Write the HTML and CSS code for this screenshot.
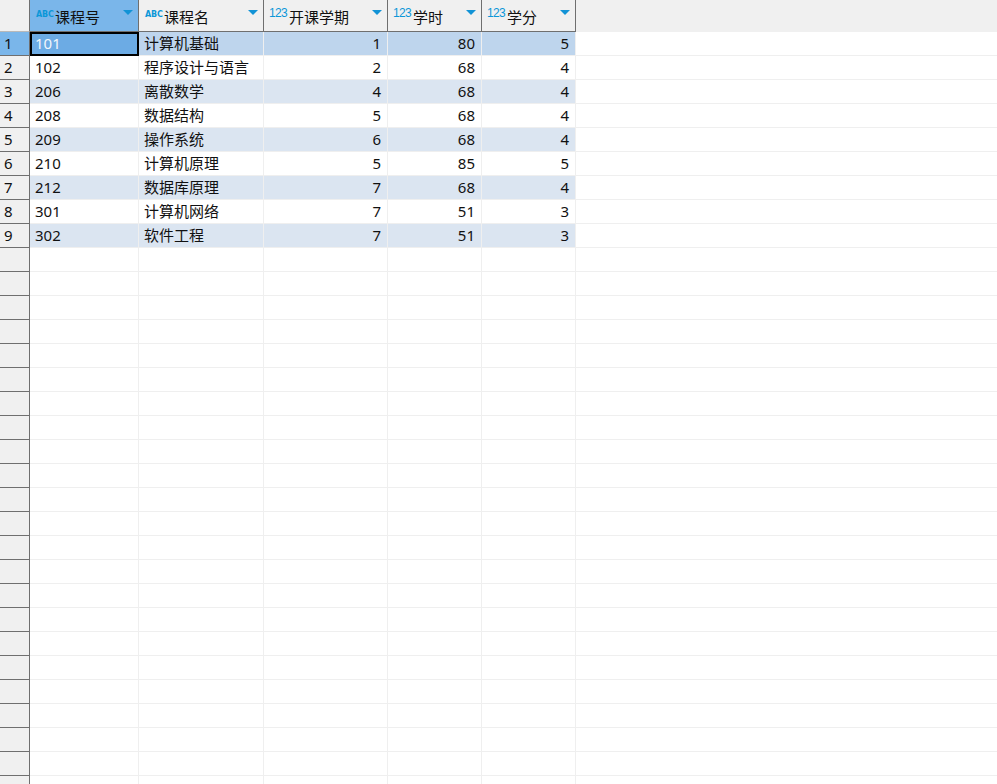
FILE: index.html
```html
<!DOCTYPE html>
<html lang="zh">
<head>
<meta charset="utf-8">
<title>课程表</title>
<link rel="stylesheet" href="styles.css">
</head>
<body>
<div class="sheet" id="sheet">
  <div class="row head">
    <div class="h corner"></div>
    <div class="h active"><span class="ic abc">ABC</span><span class="ht">课程号</span><i class="tri"></i></div>
    <div class="h"><span class="ic abc">ABC</span><span class="ht">课程名</span><i class="tri"></i></div>
    <div class="h"><span class="ic num">123</span><span class="ht">开课学期</span><i class="tri"></i></div>
    <div class="h"><span class="ic num">123</span><span class="ht">学时</span><i class="tri"></i></div>
    <div class="h"><span class="ic num">123</span><span class="ht">学分</span><i class="tri"></i></div>
    <div class="h rest"></div>
  </div>
</div>
<script src="app.js"></script>
</body>
</html>
```

FILE: styles.css
```css
html, body { margin: 0; padding: 0; background: #fff; }
body { width: 997px; height: 784px; overflow: hidden; font-family: "Noto Sans", "Noto Sans CJK SC", sans-serif; color: #111; }
.sheet { display: block; }
.row { display: grid; grid-template-columns: 30px 109px 125px 124px 94px 94px 1fr; height: 24px; }
.row.head { height: 32px; background: #f0f0f0; }
.h { box-sizing: border-box; height: 32px; border-right: 1px solid #6f6f6f; border-bottom: 1px solid #6f6f6f; display: flex; align-items: center; padding: 0 5px 0 6px; position: relative; }
.h.corner { padding: 0; border-bottom-color: #b9b9b9; }
.h.active { background: #7ab6ea; }
.h.rest { border: 0; }
.ic { color: #0c97d8; line-height: 1; position: relative; }
.abc { font: bold 8px "DejaVu Sans", sans-serif; width: 19px; top: -1px; letter-spacing: -.2px; }
.num { font: 12px "Liberation Sans", sans-serif; width: 20px; top: -3px; margin-left: -1px; letter-spacing: -.7px; }
.ht { font: 15px/18px "Noto Sans CJK SC", sans-serif; color: #111; white-space: nowrap; position: relative; top: 1px; }
.tri { position: absolute; right: 5px; top: 10px; width: 0; height: 0; border-left: 5px solid transparent; border-right: 5px solid transparent; border-top: 5px solid #1293d6; }
.c { box-sizing: border-box; height: 24px; border-right: 1px solid #efefef; border-bottom: 1px solid #efefef; padding: 0 5px; line-height: 23px; font-size: 15px; white-space: nowrap; overflow: hidden; }
.c.rn { background: #f0f0f0; border-right-color: #6f6f6f; border-bottom-color: #6f6f6f; padding-left: 4px; text-align: left; }
.c.rn.on { background: #7ab6ea; }
.c.cn { font: 15px/22px "Noto Sans CJK SC", sans-serif; }
.c.r { text-align: right; padding-right: 6px; }
.c.fill { border-right: 0; }
.row.sel .c:not(.rn):not(.fill) { background: #bed5ed; }
.row.alt .c:not(.rn):not(.fill) { background: #dbe5f1; }
.row.sel .c.cur:not(.rn):not(.fill) { background: #6cabe4; color: #f2f7fc; outline: 2px solid #000; outline-offset: -2px; border: 0; line-height: 23px; }
```

FILE: app.js
```js
var data = [
  ["101", "计算机基础", 1, 80, 5],
  ["102", "程序设计与语言", 2, 68, 4],
  ["206", "离散数学", 4, 68, 4],
  ["208", "数据结构", 5, 68, 4],
  ["209", "操作系统", 6, 68, 4],
  ["210", "计算机原理", 5, 85, 5],
  ["212", "数据库原理", 7, 68, 4],
  ["301", "计算机网络", 7, 51, 3],
  ["302", "软件工程", 7, 51, 3]
];
var sheet = document.getElementById("sheet");
function cell(cls, text) {
  var d = document.createElement("div");
  d.className = "c " + cls;
  d.textContent = text === undefined ? "" : text;
  return d;
}
for (var i = 0; i < 32; i++) {
  var r = data[i];
  var row = document.createElement("div");
  row.className = "row" + (i === 0 ? " sel" : (r && i % 2 === 0 ? " alt" : ""));
  row.appendChild(cell("rn" + (i === 0 ? " on" : ""), r ? i + 1 : ""));
  row.appendChild(cell(i === 0 ? "cur" : "", r ? r[0] : ""));
  row.appendChild(cell("cn", r ? r[1] : ""));
  row.appendChild(cell("r", r ? r[2] : ""));
  row.appendChild(cell("r", r ? r[3] : ""));
  row.appendChild(cell("r", r ? r[4] : ""));
  row.appendChild(cell("fill"));
  sheet.appendChild(row);
}
```
